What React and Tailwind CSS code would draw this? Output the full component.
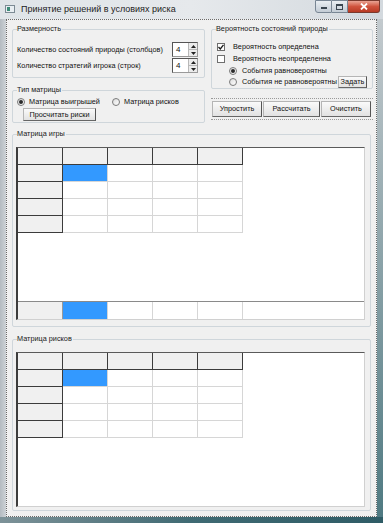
import React from "react"

const font = "font-['Liberation_Sans',Arial,sans-serif]"

const GroupBox = ({ label, className, children }) => (
  <div className={`relative border border-[#cfd6db] rounded-[2px] ${className}`}>
    <span className="absolute top-[-6px] left-[4px] bg-[#f0f0f0] pr-[1px] text-[7.3px] leading-[10px] text-[#1a1a1a] whitespace-nowrap">
      {label}
    </span>
    {children}
  </div>
)

const Spinner = () => (
  <div className="flex w-[26px] h-[15px] bg-white border border-[#9a9a9a] border-l-[#555] border-t-[#555]">
    <span className="flex-1 pl-[3px] text-[8px] leading-[13px]">4</span>
    <div className="w-[9px] flex flex-col bg-[#ececec] border-l border-[#b8b8b8]">
      <div className="flex-1 flex items-center justify-center border-b border-[#b8b8b8]">
        <svg width="5" height="3" viewBox="0 0 5 3"><path d="M0 3 L2.5 0 L5 3 Z" fill="#222" /></svg>
      </div>
      <div className="flex-1 flex items-center justify-center">
        <svg width="5" height="3" viewBox="0 0 5 3"><path d="M0 0 L2.5 3 L5 0 Z" fill="#222" /></svg>
      </div>
    </div>
  </div>
)

const Radio = ({ checked }) => (
  <span className="w-[8px] h-[8px] rounded-full border border-[#7a7a7a] bg-gradient-to-br from-[#dcdcdc] to-white flex items-center justify-center shrink-0">
    {checked && <span className="w-[4px] h-[4px] rounded-full bg-[#2a2a2a]" />}
  </span>
)

const Check = ({ checked }) => (
  <span className="w-[8px] h-[8px] border border-[#6f6f6f] bg-white flex items-center justify-center shrink-0">
    {checked && (
      <svg width="6" height="6" viewBox="0 0 6 6">
        <path d="M0.5 3 L2.3 5 L5.5 0.8" stroke="#1a1a1a" strokeWidth="1.3" fill="none" />
      </svg>
    )}
  </span>
)

const Button = ({ children, className }) => (
  <div
    className={`flex items-center justify-center whitespace-nowrap bg-gradient-to-b from-[#fafafa] to-[#e2e2e2] border border-[#b5b5b5] border-r-[#555] border-b-[#666] text-[7.3px] leading-[10px] ${className}`}
  >
    {children}
  </div>
)

const FixedCell = () => (
  <div className="w-[45px] h-[17px] bg-[#f0f0f0] border-r border-b border-[#3c3c3c] shrink-0" />
)

const Cell = ({ selected }) => (
  <div
    className={`w-[45px] h-[17px] border-r border-b border-[#d6d6d6] shrink-0 ${selected ? "bg-[#3399ff]" : "bg-white"}`}
  />
)

const Grid = ({ className, footer }) => (
  <div className={`flex flex-col bg-white border-t border-l-2 border-t-[#5a5a5a] border-l-[#3c3c3c] border-r border-b border-r-[#d0d0d0] border-b-[#d0d0d0] ${className}`}>
    <div className="flex">
      {[0, 1, 2, 3, 4].map((i) => (
        <FixedCell key={i} />
      ))}
    </div>
    {[0, 1, 2, 3].map((r) => (
      <div key={r} className="flex">
        <FixedCell />
        {[0, 1, 2, 3].map((c) => (
          <Cell key={c} selected={r === 0 && c === 0} />
        ))}
      </div>
    ))}
    <div className="flex-1" />
    {footer && (
      <div className="flex h-[18px] border-t border-[#8a8a8a]">
        <div className="w-[45px] h-full bg-[#f0f0f0] border-r border-[#9a9a9a]" />
        <div className="w-[45px] h-full bg-[#3399ff] border-r border-[#d6d6d6]" />
        <div className="w-[45px] h-full border-r border-[#d6d6d6]" />
        <div className="w-[45px] h-full border-r border-[#d6d6d6]" />
        <div className="w-[45px] h-full border-r border-[#d6d6d6]" />
        <div className="flex-1" />
      </div>
    )}
  </div>
)

export default function App() {
  return (
    <div className={`w-[383px] h-[523px] flex flex-col overflow-hidden bg-[#c4cacf] text-[#111] ${font}`}>
      {/* title bar */}
      <div className="h-[19px] flex items-start bg-gradient-to-r from-[#dfe4e8] via-[#e6e9ec] to-[#d3d9de]">
        <div className="mt-[5px] ml-[5px] w-[10px] h-[8px] border border-[#7c8a94] bg-[#e8eef2] flex items-center pl-[1px]">
          <span className="w-[3px] h-[4px] bg-[#3c8c78]" />
        </div>
        <span className="ml-[6px] mt-[4px] text-[9px] leading-[11px] text-[#1c1c1c]">
          Принятие решений в условиях риска
        </span>
        <div className="ml-auto mr-[3px] flex">
          <div className="w-[17px] h-[13px] rounded-bl-[3px] border border-[#788694] bg-gradient-to-b from-[#e9eef2] to-[#c3ccd5] flex items-end justify-center pb-[3px]">
            <span className="w-[6px] h-[2px] bg-[#3a4650]" />
          </div>
          <div className="w-[16px] h-[13px] border-y border-r border-[#788694] bg-gradient-to-b from-[#e9eef2] to-[#c3ccd5] flex items-center justify-center">
            <span className="w-[7px] h-[6px] border border-[#3a4650] border-t-2" />
          </div>
          <div className="w-[32px] h-[13px] rounded-br-[3px] border-y border-r border-[#7a3a2e] bg-gradient-to-b from-[#e9a394] via-[#d0533d] to-[#b83a24] flex items-center justify-center">
            <svg width="8" height="7" viewBox="0 0 8 7">
              <path d="M1 0.5 L7 6.5 M7 0.5 L1 6.5" stroke="white" strokeWidth="1.8" />
            </svg>
          </div>
        </div>
      </div>

      <div className="flex h-[498px]">
        <div className="w-[6px] bg-gradient-to-r from-[#b4bbc1] to-[#cdd2d6]" />
        {/* client */}
        <div className="w-[371px] h-full bg-[#f0f0f0] border border-dotted border-[#6a6a6a] pl-[5px] pt-[9px] text-[7.3px] leading-[10px]">
          <div className="flex gap-[6px]">
            {/* left column */}
            <div className="w-[193px] flex flex-col">
              <GroupBox label="Размерность" className="h-[49px]">
                <div className="flex items-center mt-[12px] pl-[4px]">
                  <span className="w-[155px] whitespace-nowrap">Количество состояний природы (столбцов)</span>
                  <Spinner />
                </div>
                <div className="flex items-center mt-[1px] pl-[4px]">
                  <span className="w-[155px] whitespace-nowrap">Количество стратегий игрока (строк)</span>
                  <Spinner />
                </div>
              </GroupBox>
              <GroupBox label="Тип матрицы" className="h-[33px] mt-[12px]">
                <div className="flex items-center mt-[6px] pl-[4px]">
                  <Radio checked />
                  <span className="ml-[4px] w-[83px] whitespace-nowrap">Матрица выигрышей</span>
                  <Radio />
                  <span className="ml-[4px] whitespace-nowrap">Матрица рисков</span>
                </div>
                <Button className="ml-[10px] mt-[1px] w-[73px] h-[13px]">Просчитать риски</Button>
              </GroupBox>
            </div>

            {/* right column */}
            <div className="w-[162px] flex flex-col">
              <GroupBox label="Вероятность состояний природы" className="h-[60px]">
                <div className="flex flex-col pl-[5px] pt-[11px]">
                  <div className="flex items-center h-[12px]">
                    <Check checked />
                    <span className="ml-[8px] whitespace-nowrap">Вероятность определена</span>
                  </div>
                  <div className="flex items-center h-[12px]">
                    <Check />
                    <span className="ml-[8px] whitespace-nowrap">Вероятность неопределенна</span>
                  </div>
                  <div className="flex items-center h-[11px] pl-[12px]">
                    <Radio checked />
                    <span className="ml-[5px] whitespace-nowrap">События равновероятны</span>
                  </div>
                  <div className="flex items-center h-[12px] pl-[12px]">
                    <Radio />
                    <span className="ml-[5px] w-[96px] whitespace-nowrap">События не равновероятны</span>
                    <Button className="w-[29px] h-[12px]">Задать</Button>
                  </div>
                </div>
              </GroupBox>
              <div className="mt-[9px] h-[22px] border-y border-dotted border-[#9a9a9a] flex items-center pl-[1px] gap-[1px]">
                <Button className="w-[50px] h-[16px]">Упростить</Button>
                <Button className="w-[57px] h-[16px]">Рассчитать</Button>
                <Button className="w-[50px] h-[16px]">Очистить</Button>
              </div>
            </div>
          </div>

          <GroupBox label="Матрица игры" className="w-[359px] h-[193px] mt-[11px] pl-[3px] pt-[12px]">
            <Grid className="w-[349px] h-[173px]" footer />
          </GroupBox>

          <GroupBox label="Матрица рисков" className="w-[359px] h-[172px] mt-[12px] pl-[3px] pt-[12px]">
            <Grid className="w-[349px] h-[155px]" />
          </GroupBox>
        </div>
        <div className="w-[6px] bg-gradient-to-b from-[#c3cace] via-[#8aa2a8] to-[#4f7a82]" />
      </div>
      <div className="h-[6px] bg-gradient-to-r from-[#7d9298] via-[#3f6a73] to-[#2f5c66]" />
    </div>
  )
}
